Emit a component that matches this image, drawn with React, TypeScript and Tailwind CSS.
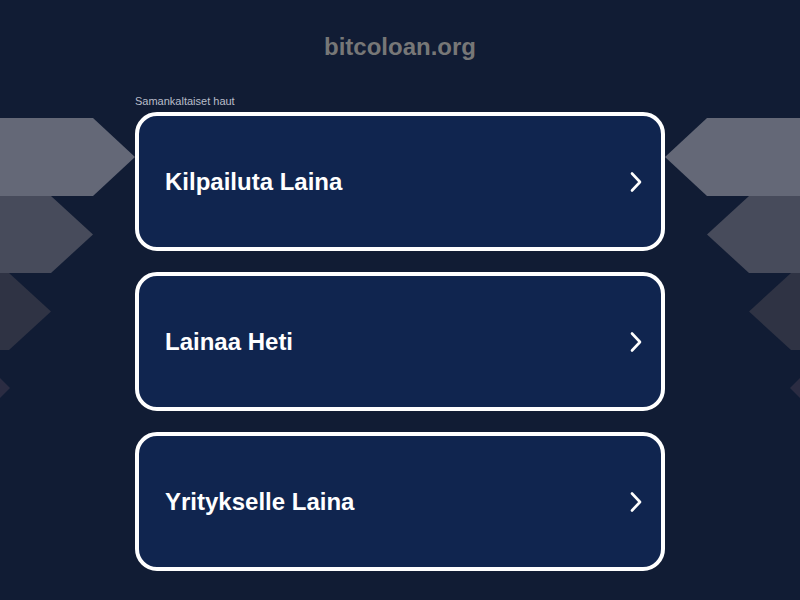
const links = ["Kilpailuta Laina", "Lainaa Heti", "Yritykselle Laina"];

// decorative arrow shapes on both sides, mirrored around x=400
const shapes = [
  { pts: "0,118 93,118 135,157 93,196 0,196", fill: "#646877" },
  { pts: "0,196 51,196 93,234.5 51,273 0,273", fill: "#474b5b" },
  { pts: "0,273 9,273 51,311.5 9,350 0,350", fill: "#2f3344" },
  { pts: "0,378 10,388 0,398", fill: "#2b2c42" },
];

function mirror(pts: string) {
  return pts
    .split(" ")
    .map((p) => {
      const [x, y] = p.split(",").map(Number);
      return `${800 - x},${y}`;
    })
    .join(" ");
}

function Chevron() {
  return (
    <svg width="14" height="22" viewBox="0 0 14 22" fill="none">
      <path
        d="M3 2.5 L11 11 L3 19.5"
        stroke="white"
        strokeWidth="2.6"
        strokeLinecap="round"
        strokeLinejoin="round"
      />
    </svg>
  );
}

export default function App() {
  return (
    <div className="relative min-h-[600px] w-full overflow-hidden bg-[#111c34] font-['Liberation_Sans',Arial,sans-serif]">
      <svg
        className="pointer-events-none absolute left-0 top-0"
        width="800"
        height="600"
        viewBox="0 0 800 600"
      >
        {shapes.map((s, i) => (
          <g key={i}>
            <polygon points={s.pts} fill={s.fill} />
            <polygon points={mirror(s.pts)} fill={s.fill} />
          </g>
        ))}
      </svg>

      <div className="relative mx-auto w-[530px]">
        <div className="flex h-[94px] items-center justify-center">
          <h1 className="text-[24px] font-bold text-[#777777]">bitcoloan.org</h1>
        </div>

        <p className="text-[11px] leading-[14px] text-[#b9bdc9]">Samankaltaiset haut</p>

        <div className="mt-[4px] flex flex-col gap-[21px]">
          {links.map((item) => (
            <a
              key={item}
              href="#"
              className="flex h-[139px] items-center justify-between rounded-[22px] border-4 border-white bg-[#10254f] pl-[26px] pr-[18px]"
            >
              <span className="text-[24px] font-bold text-white">{item}</span>
              <Chevron />
            </a>
          ))}
        </div>
      </div>
    </div>
  );
}
